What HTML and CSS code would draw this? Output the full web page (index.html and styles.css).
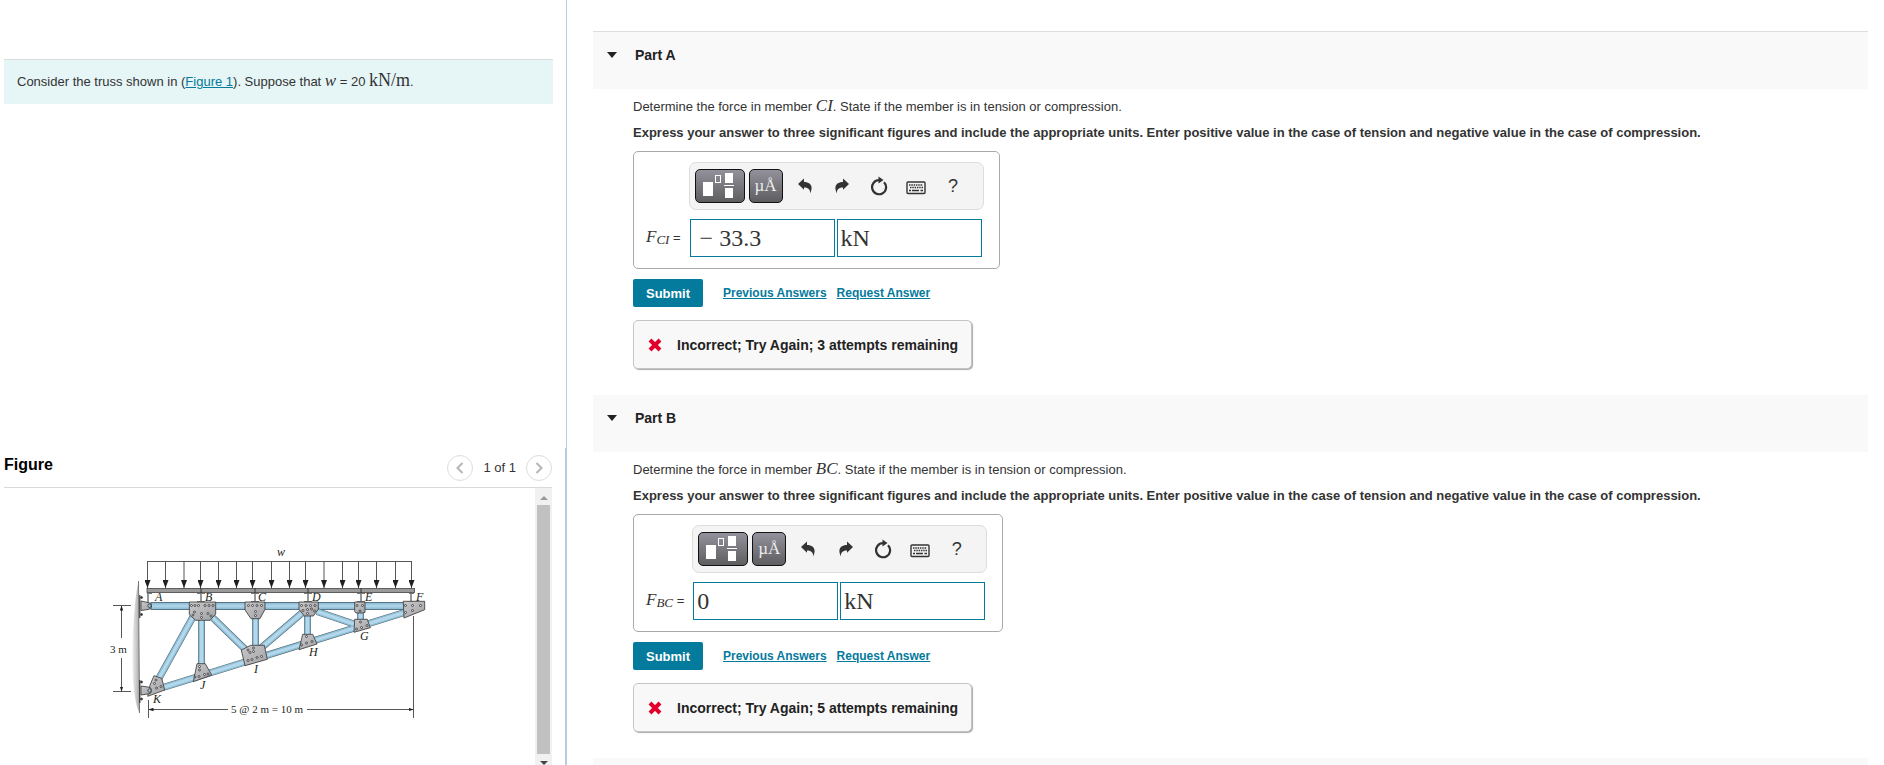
FILE: index.html
```html
<!DOCTYPE html>
<html lang="en">
<head>
<meta charset="utf-8">
<title>Truss problem</title>
<link rel="stylesheet" href="styles.css">
</head>
<body>
<svg class="sprite" aria-hidden="true">
  <symbol id="i-template" viewBox="0 0 32 26">
    <rect x="1" y="10" width="10" height="14" fill="#fff"/>
    <rect x="13.500" y="3.500" width="5" height="7" fill="none" stroke="#fff"/>
    <rect x="23" y="1" width="8" height="10" fill="#fff"/>
    <rect x="22" y="13" width="10" height="1" fill="#fff"/>
    <rect x="23" y="16" width="8" height="10" fill="#fff"/>
  </symbol>
  <symbol id="i-undo" viewBox="0 0 16 16">
    <path d="M1 6 7 .500V4c6.500 0 9.800 4.500 6 11.500C13.500 11.500 11 9.500 7 9.500v2.300z" fill="#333"/>
  </symbol>
  <symbol id="i-redo" viewBox="0 0 16 16">
    <path d="M15 6 9 .500V4C2.500 4-.800 8.500 3 15.500 2.500 11.500 5 9.500 9 9.500v2.300z" fill="#333"/>
  </symbol>
  <symbol id="i-reset" viewBox="0 0 18 20">
    <path d="M14 6.200A7 7 0 1 1 9 4.200" fill="none" stroke="#333" stroke-width="2.200"/>
    <path d="M8.500 .5 13.500 4 8.500 7.500z" fill="#333"/>
  </symbol>
  <symbol id="i-keyboard" viewBox="0 0 20 14">
    <rect x="1" y="1" width="18" height="11.500" rx="1" fill="#f4f4f4" stroke="#333" stroke-width="1.400"/>
    <path d="M3 4h14M4 6.500h13" stroke="#333" stroke-width="1.600" stroke-dasharray="1.500 .8"/>
    <path d="M3 9.500h2M6 9.500h7M14.500 9.500H17" stroke="#333" stroke-width="1.600"/>
  </symbol>
  <symbol id="i-wrong" viewBox="0 0 14 14">
    <path d="M2 2 12 12M12 2 2 12" stroke="#e0002b" stroke-width="4"/>
  </symbol>
</svg>

<div class="page">
  <aside class="side">
    <section class="intro">
      <p class="prompt">Consider the truss shown in (<a href="#figure">Figure 1</a>). Suppose that <i class="math">w</i> = 20 <span class="math unit">kN/m</span>.</p>
    </section>
    <section class="figure" id="figure">
      <header class="figure-head">
        <h2>Figure</h2>
        <nav class="pager">
          <button class="round" type="button" aria-label="Previous figure"><svg viewBox="0 0 10 12" width="10" height="12"><path d="M7.500 1 2.500 6l5 5" fill="none" stroke="#b5b5b5" stroke-width="2"/></svg></button>
          <span>1 of 1</span>
          <button class="round" type="button" aria-label="Next figure"><svg viewBox="0 0 10 12" width="10" height="12"><path d="M2.500 1l5 5-5 5" fill="none" stroke="#b5b5b5" stroke-width="2"/></svg></button>
        </nav>
      </header>
      <div class="figure-body">
        <div class="canvas">
          <svg class="truss" viewBox="100 540 340 190" width="340" height="190" role="img" aria-label="Truss">
            <defs>
              <linearGradient id="wall"><stop offset="0" stop-color="#eee"/><stop offset="1" stop-color="#aaa"/></linearGradient>
              <linearGradient id="chord" x1="0" y1="0" x2="0" y2="1"><stop offset="0" stop-color="#7fb4d2"/><stop offset=".5" stop-color="#b4d8ea"/><stop offset="1" stop-color="#7fb4d2"/></linearGradient>
              <linearGradient id="plate" x1="0" y1="0" x2="1" y2="1"><stop offset="0" stop-color="#c9c9cc"/><stop offset="1" stop-color="#a2a2a6"/></linearGradient>
              <marker id="load" markerUnits="userSpaceOnUse" markerWidth="6" markerHeight="9" refX="3" refY="8" ><path d="M0 0h6L3 8z" fill="#231f20"/></marker>
              <marker id="dim" markerUnits="userSpaceOnUse" markerWidth="5" markerHeight="4" refX="4.500" refY="2" orient="auto-start-reverse"><path d="M0 .3 5 2 0 3.700z" fill="#231f20"/></marker>
            </defs>
            <path d="M138.500 581C133 605 131 660 133.500 685 135 700 137 708 139.500 713z" fill="url(#wall)"/>
            <path d="M138.500 581 139.500 713" stroke="#777"/>
            <g fill="none" stroke="#444" stroke-width=".9">
              <path d="M147 561.500H412"/>
              <path marker-end="url(#load)" d="M147.500 561.500V588"/><path marker-end="url(#load)" d="M165.500 561.500V588"/><path marker-end="url(#load)" d="M184 561.500V588"/><path marker-end="url(#load)" d="M200.500 561.500V588"/><path marker-end="url(#load)" d="M218.500 561.500V588"/><path marker-end="url(#load)" d="M236.500 561.500V588"/><path marker-end="url(#load)" d="M252.500 561.500V588"/><path marker-end="url(#load)" d="M271.500 561.500V588"/><path marker-end="url(#load)" d="M289.500 561.500V588"/><path marker-end="url(#load)" d="M305.500 561.500V588"/><path marker-end="url(#load)" d="M324 561.500V588"/><path marker-end="url(#load)" d="M342.500 561.500V588"/><path marker-end="url(#load)" d="M358.500 561.500V588"/><path marker-end="url(#load)" d="M376.500 561.500V588"/><path marker-end="url(#load)" d="M395.500 561.500V588"/><path marker-end="url(#load)" d="M411.500 561.500V588"/>
            </g>
            <g fill="none" stroke="#777" stroke-width="1">
              <path d="M148 593V603M201 593V602M255 593V602M308 593V602M361 593V602M411 593V602" stroke-width="1.500"/>
              <path d="M147 593.500h5M197 593.500h8M197 601.500h8M251 593.500h8M251 601.500h8M304 593.500h8M304 601.500h8M357 593.500h8M357 601.500h8M409 593.500h5M409 601.500h5"/>
            </g>
            <rect x="147" y="588.500" width="267.500" height="4" fill="#999" stroke="#444" stroke-width=".8"/>
            <path d="M201 588v5M255 588v5M308 588v5M361 588v5" stroke="#333"/>
            <rect x="151" y="602.500" width="256" height="7" fill="url(#chord)" stroke="#435c69" stroke-width=".8"/>
            <g stroke="#566a75" stroke-width="7">
              <path d="M194 615 158 680M201.500 618V666M212 617 246 650M255.500 616V648M302 613 261 648M307.500 614V636M317 611.500 354 624M360.500 611V621M163 687.500 406 612"/>
            </g>
            <g stroke="#8fc0da" stroke-width="5.800">
              <path d="M194 615 158 680M201.500 618V666M212 617 246 650M255.500 616V648M302 613 261 648M307.500 614V636M317 611.500 354 624M360.500 611V621M163 687.500 406 612"/>
            </g>
            <g stroke="#b4d8ea" stroke-width="3">
              <path d="M194 615 158 680M201.500 618V666M212 617 246 650M255.500 616V648M302 613 261 648M307.500 614V636M317 611.500 354 624M360.500 611V621M163 687.500 406 612"/>
            </g>
            <g fill="url(#plate)" stroke="#333" stroke-width=".8">
              <path d="M139.800 595v23M139.800 680v23" stroke-width="1.200"/>
              <circle cx="141.500" cy="597.500" r="1" fill="#333"/><circle cx="141.500" cy="614.500" r="1" fill="#333"/><circle cx="141.500" cy="682" r="1" fill="#333"/><circle cx="141.500" cy="699" r="1" fill="#333"/>
              <path d="M141 601 148 602.500a3.500 3.500 0 0 1 0 7L141 610.500z"/>
              <path d="M154 675.700 161.700 678.300 164.700 690 147.700 696.300 150 685z"/>
              <path d="M141 686 148 687a3.500 3.500 0 0 1 0 7L141 695z"/>
              <path d="M189.300 602H215.700V614L210 620.300H195.700L189.300 614.700z"/>
              <path d="M245 602H265V609.300L260 618.700H251L245 610z"/>
              <path d="M299 602H318.300V609.300L313.300 616H304.300L299 609.300z"/>
              <path d="M354.700 602H365V612.300L362.700 613H356L354.700 611.300z"/>
              <path d="M403.300 601.300H424.700V609.700L404 618z"/>
              <path d="M354.700 619.300H367.300L370.300 627.700 354 632.300z"/>
              <path d="M302.700 634.300H312.700L317 644 299 649.700z"/>
              <path d="M241.300 650 250.700 645.300H264.300L267.300 659.300 245 665.700z"/>
              <path d="M197 663.700H205.300L211.700 675 193.300 681.700z"/>
            </g>
            <g fill="#ddd" stroke="#333" stroke-width=".8">
              <circle cx="149.500" cy="605.700" r="1.700" fill="#9cc9e0"/><circle cx="149.500" cy="690.500" r="1.700" fill="#9cc9e0"/>
              <circle cx="191.500" cy="605.500" r="1"/><circle cx="195" cy="605.500" r="1"/><circle cx="198.500" cy="605.500" r="1"/><circle cx="205" cy="605.500" r="1"/><circle cx="209" cy="605.500" r="1"/><circle cx="213" cy="605.500" r="1"/><circle cx="194.500" cy="612" r="1"/><circle cx="193" cy="615" r="1"/><circle cx="201.500" cy="613.500" r="1"/><circle cx="201.500" cy="617.500" r="1"/><circle cx="208" cy="613.500" r="1"/><circle cx="211" cy="616" r="1"/>
              <circle cx="248.500" cy="605.500" r="1"/><circle cx="252.500" cy="605.500" r="1"/><circle cx="257" cy="605.500" r="1"/><circle cx="261.500" cy="605.500" r="1"/><circle cx="255.500" cy="611.500" r="1"/><circle cx="255.500" cy="615.500" r="1"/>
              <circle cx="301.500" cy="605.500" r="1"/><circle cx="306" cy="605.500" r="1"/><circle cx="310.500" cy="605.500" r="1"/><circle cx="315" cy="605.500" r="1"/><circle cx="303" cy="610.500" r="1"/><circle cx="307.500" cy="609.500" r="1"/><circle cx="311.500" cy="609" r="1"/><circle cx="314.500" cy="611" r="1"/><circle cx="307.500" cy="613.500" r="1"/>
              <circle cx="357" cy="605.500" r="1"/><circle cx="362.500" cy="605.500" r="1"/><circle cx="360" cy="611" r="1"/>
              <circle cx="405.500" cy="605.500" r="1"/><circle cx="412.500" cy="605.500" r="1"/><circle cx="420.500" cy="605.500" r="1"/><circle cx="412.500" cy="610.500" r="1"/><circle cx="405.500" cy="612.500" r="1"/>
              <circle cx="360.500" cy="622" r="1"/><circle cx="356.500" cy="629" r="1"/><circle cx="361.500" cy="627.500" r="1"/><circle cx="367" cy="625.500" r="1"/>
              <circle cx="306.500" cy="636.500" r="1"/><circle cx="301.500" cy="645" r="1"/><circle cx="306.500" cy="643" r="1"/><circle cx="312" cy="641.500" r="1"/>
              <circle cx="253.500" cy="648" r="1"/><circle cx="253.500" cy="651.500" r="1"/><circle cx="248" cy="650" r="1"/><circle cx="250" cy="652.500" r="1"/><circle cx="248" cy="660.500" r="1"/><circle cx="252" cy="659.500" r="1"/><circle cx="257" cy="657.500" r="1"/><circle cx="261.500" cy="656.500" r="1"/>
              <circle cx="199.500" cy="666.500" r="1"/><circle cx="199.500" cy="670" r="1"/><circle cx="195" cy="677" r="1"/><circle cx="199" cy="676.500" r="1"/><circle cx="204.500" cy="674.500" r="1"/><circle cx="208" cy="674" r="1"/>
              <circle cx="156" cy="680" r="1"/><circle cx="154.500" cy="683.500" r="1"/><circle cx="156.500" cy="688" r="1"/><circle cx="161" cy="686.500" r="1"/>
            </g>
            <g fill="none" stroke="#444" stroke-width=".9">
              <path d="M113 605.500H131M113 691.500H131M148.500 700V718M413.500 616V718"/>
              <path d="M121.500 638V606" marker-end="url(#dim)"/><path d="M121.500 658V691" marker-end="url(#dim)"/>
              <path d="M228 709.500H149" marker-end="url(#dim)"/><path d="M307 709.500H413" marker-end="url(#dim)"/>
            </g>
            <g class="joint">
              <text x="277" y="556">w</text>
              <text x="155" y="601">A</text><text x="205" y="601">B</text><text x="258" y="601">C</text><text x="312" y="601">D</text><text x="365" y="601">E</text><text x="416" y="601">F</text>
              <text x="360" y="640">G</text><text x="309" y="656">H</text><text x="254" y="673">I</text><text x="200" y="689">J</text><text x="153" y="703">K</text>
            </g>
            <g class="size">
              <text x="110" y="653">3 m</text>
              <text x="231" y="713">5 @ 2 m = 10 m</text>
            </g>
          </svg>
        </div>
        <div class="scrollbar" aria-hidden="true">
          <svg viewBox="0 0 8 4" width="8" height="4"><path d="M0 4 4 0l4 4z" fill="#9a9a9a"/></svg>
          <div class="thumb"></div>
          <svg viewBox="0 0 8 4" width="8" height="4"><path d="M0 0h8L4 4z" fill="#444"/></svg>
        </div>
      </div>
    </section>
  </aside>

  <main class="parts">
    <section class="part">
      <h2 class="part-head first"><svg viewBox="0 0 10 6" width="10" height="6"><path d="M0 0h10L5 6z" fill="#222"/></svg>Part A</h2>
      <div class="part-body">
        <p>Determine the force in member <i class="math">CI</i>. State if the member is in tension or compression.</p>
        <p class="strong">Express your answer to three significant figures and include the appropriate units. Enter positive value in the case of tension and negative value in the case of compression.</p>
        <form class="answer">
          <div class="tools">
            <button class="key wide" type="button" aria-label="Templates"><svg width="32" height="26"><use href="#i-template"/></svg></button>
            <button class="key" type="button">µÅ</button>
            <button class="tool" type="button" aria-label="Undo"><svg width="16" height="16"><use href="#i-undo"/></svg></button>
            <button class="tool" type="button" aria-label="Redo"><svg width="16" height="16"><use href="#i-redo"/></svg></button>
            <button class="tool" type="button" aria-label="Reset"><svg width="18" height="20"><use href="#i-reset"/></svg></button>
            <button class="tool" type="button" aria-label="Keyboard"><svg class="low" width="20" height="14"><use href="#i-keyboard"/></svg></button>
            <button class="tool" type="button">?</button>
          </div>
          <label class="name" for="value-a"><i>F<small>CI</small></i> =</label>
          <div class="fields">
            <input id="value-a" type="text" value="&nbsp;− 33.3">
            <input type="text" value="kN" aria-label="Units">
          </div>
        </form>
        <div class="actions">
          <button class="submit" type="button">Submit</button>
          <a href="#previous">Previous Answers</a>
          <a href="#request">Request Answer</a>
        </div>
        <div class="feedback"><svg width="14" height="14"><use href="#i-wrong"/></svg>Incorrect; Try Again; 3 attempts remaining</div>
      </div>
    </section>

    <section class="part">
      <h2 class="part-head"><svg viewBox="0 0 10 6" width="10" height="6"><path d="M0 0h10L5 6z" fill="#222"/></svg>Part B</h2>
      <div class="part-body">
        <p>Determine the force in member <i class="math">BC</i>. State if the member is in tension or compression.</p>
        <p class="strong">Express your answer to three significant figures and include the appropriate units. Enter positive value in the case of tension and negative value in the case of compression.</p>
        <form class="answer">
          <div class="tools">
            <button class="key wide" type="button" aria-label="Templates"><svg width="32" height="26"><use href="#i-template"/></svg></button>
            <button class="key" type="button">µÅ</button>
            <button class="tool" type="button" aria-label="Undo"><svg width="16" height="16"><use href="#i-undo"/></svg></button>
            <button class="tool" type="button" aria-label="Redo"><svg width="16" height="16"><use href="#i-redo"/></svg></button>
            <button class="tool" type="button" aria-label="Reset"><svg width="18" height="20"><use href="#i-reset"/></svg></button>
            <button class="tool" type="button" aria-label="Keyboard"><svg class="low" width="20" height="14"><use href="#i-keyboard"/></svg></button>
            <button class="tool" type="button">?</button>
          </div>
          <label class="name" for="value-b"><i>F<small>BC</small></i> =</label>
          <div class="fields">
            <input id="value-b" type="text" value="0">
            <input type="text" value="kN" aria-label="Units">
          </div>
        </form>
        <div class="actions">
          <button class="submit" type="button">Submit</button>
          <a href="#previous">Previous Answers</a>
          <a href="#request">Request Answer</a>
        </div>
        <div class="feedback"><svg width="14" height="14"><use href="#i-wrong"/></svg>Incorrect; Try Again; 5 attempts remaining</div>
      </div>
    </section>
    <div class="part-head"></div>
  </main>
</div>
</body>
</html>
```

FILE: styles.css
```css
* { box-sizing: border-box; }
body {
  margin: 0;
  font-family: "Liberation Sans", Arial, sans-serif;
  font-size: 13px;
  line-height: 20px;
  color: #333;
  background: #fff;
}
h2, p { margin: 0; }
a { color: #047a9c; }
button { font-family: inherit; padding: 0; border: 0; background: none; color: inherit; }
svg { display: block; flex: none; }
.sprite { position: absolute; width: 0; height: 0; }
.math { font-family: "Liberation Serif", serif; font-size: 17px; line-height: 16px; }
.unit { font-size: 18px; }

.page { display: flex; height: 100vh; overflow: hidden; }

/* Left column */
.side {
  flex: 0 0 567px;
  display: grid;
  grid-template-rows: 448px 1fr;
  min-height: 0;
}
.intro { padding: 59px 13px 0 4px; border-right: 1px solid #b9cbdc; }
.prompt {
  padding: 12px 13px;
  border-top: 1px solid #d8dede;
  background: #e6f5f6;
}
.figure {
  display: flex;
  flex-direction: column;
  min-height: 0;
  padding-left: 4px;
  padding-right: 13px;
  border-right: 2px solid #b9cbe0;
}
.figure-head {
  display: flex;
  justify-content: space-between;
  height: 40px;
  padding-top: 7px;
  border-bottom: 1px solid #d9d9d9;
}
.figure-head h2 { font-size: 16px; color: #000; }
.pager { display: flex; align-items: center; gap: 10px; height: 26px; }
.round {
  display: grid;
  place-items: center;
  width: 26px;
  height: 26px;
  border: 1px solid #ddd;
  border-radius: 50%;
}
.figure-body { flex: 1; display: flex; min-height: 0; }
.canvas { flex: 1; padding: 52px 0 0 96px; overflow: hidden; }
.scrollbar {
  display: flex;
  flex-direction: column;
  align-items: center;
  justify-content: space-between;
  gap: 5px;
  width: 17px;
  padding: 8px 2px 0;
  background: #f1f1f1;
}
.thumb { flex: 1; width: 13px; margin-bottom: 2px; background: #c1c1c1; }
.truss { font-family: "Liberation Serif", serif; fill: #231f20; }
.joint { font-size: 12px; font-style: italic; }
.size { font-size: 11px; }

/* Right column */
.parts { flex: 1; padding: 31px 16px 0 26px; }
.part-head {
  display: flex;
  align-items: flex-start;
  gap: 18px;
  min-height: 57px;
  padding: 13px 14px;
  font-size: 14px;
  line-height: 20px;
  font-weight: bold;
  color: #222;
  background: #f9f9f9;
}
.part-head svg { margin-top: 7px; }
.first { border-top: 1px solid #ddd; min-height: 58px; }
.part-body { padding: 8px 40px 26px; }
.strong { margin-top: 6px; font-weight: bold; }

.answer {
  display: grid;
  grid-template-columns: auto auto;
  width: fit-content;
  column-gap: 8px;
  row-gap: 9px;
  margin-top: 8px;
  padding: 10px 15px 11px 12px;
  border: 1px solid #aaa;
  border-radius: 5px;
}
.tools {
  grid-column: 2;
  display: flex;
  align-items: center;
  gap: 4px;
  width: 295px;
  height: 48px;
  padding: 0 5px;
  border: 1px solid #ddd;
  border-radius: 7px;
  background: #f4f4f4;
}
.key {
  display: grid;
  place-items: center;
  width: 34px;
  height: 34px;
  border: 1px solid #111;
  border-radius: 5px;
  background: linear-gradient(#93919b, #5e5e60);
  color: #eee;
  font-family: "Liberation Serif", serif;
  font-size: 17px;
}
.wide { width: 50px; padding: 0 4px 2px 0; }
.tool { display: grid; place-items: center; width: 33px; height: 34px; font-size: 18px; }
.key + .tool { width: 34px; margin-left: 1px; }
.low { margin-top: 4px; }
.name { align-self: center; }
.name i { font-family: "Liberation Serif", serif; font-size: 17px; }
.name small { font-size: 13px; vertical-align: -2px; }
.fields { display: flex; gap: 2px; margin-left: 1px; }
.fields input {
  width: 145px;
  height: 38px;
  padding: 0 3px;
  border: 1px solid #047a9c;
  background: #fff;
  color: #333;
  font-family: "Liberation Serif", serif;
  font-size: 24px;
}
.actions { display: flex; align-items: center; margin-top: 10px; font-size: 12px; font-weight: bold; }
.actions a { margin-right: 10px; }
.submit {
  width: 70px;
  height: 28px;
  margin-right: 20px;
  border-radius: 2px;
  background: #047a9c;
  color: #fff;
  font-size: 13px;
  font-weight: bold;
}
.feedback {
  display: flex;
  align-items: center;
  gap: 15px;
  width: fit-content;
  height: 49px;
  margin-top: 13px;
  padding: 0 13px 0 14px;
  border: 1px solid #c4c4c4;
  border-radius: 5px;
  box-shadow: 1px 1px 1px #aaa;
  background: #f8f8f8;
  color: #222;
  font-size: 14px;
  font-weight: bold;
}
```
